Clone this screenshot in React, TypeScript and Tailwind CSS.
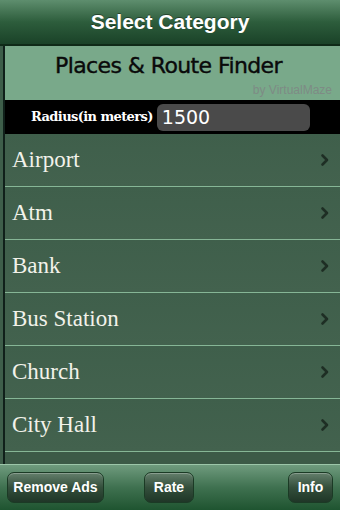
const categories = ['Airport', 'Atm', 'Bank', 'Bus Station', 'Church', 'City Hall'];

function Chevron() {
  return (
    <svg width="10" height="14" viewBox="0 0 10 14" className="shrink-0">
      <path d="M2.5 2.5 L7 7 L2.5 11.5" fill="none" stroke="#1e2e24" strokeWidth="2.6" strokeLinecap="round" strokeLinejoin="round" />
    </svg>
  );
}

function ToolButton({ label, className }: { label: string; className?: string }) {
  return (
    <button
      className={`h-[31px] rounded-[7px] border border-[#1b3a25] bg-gradient-to-b from-[#647f6c] via-[#344f3c] to-[#1f3627] text-[14px] font-bold text-white shadow-[inset_0_1px_0_rgba(255,255,255,0.25)] ${className ?? ''}`}
      style={{ fontFamily: '"Liberation Sans", Arial, sans-serif' }}
    >
      {label}
    </button>
  );
}

export default function App() {
  return (
    <div className="w-[340px] h-[510px] overflow-hidden flex flex-col bg-[#3a5a45]">
      <header
        className="h-[46px] shrink-0 flex items-center justify-center bg-gradient-to-b from-[#5e8e6e] via-[#2d5d3c] to-[#1a4228] border-b-2 border-[#0f2a18]"
        style={{ fontFamily: '"Liberation Sans", Arial, sans-serif' }}
      >
        <h1 className="text-[21px] font-bold text-white [text-shadow:0_-1px_0_rgba(0,0,0,0.4)]">Select Category</h1>
      </header>

      <div className="flex-1 flex min-h-0">
        <div className="w-[3px] shrink-0 bg-[#3e5e4a]" />
        <div className="w-[2px] shrink-0 bg-[#10201a]" />
        <div className="flex-1 flex flex-col min-w-0">
          <div className="h-[54px] shrink-0 bg-[#79a98a] flex flex-col items-center pt-[7px]">
            <div
              className="text-[22px] leading-[26px] text-[#0a0a0a] pr-[8px] [-webkit-text-stroke:0.4px_#0a0a0a]"
              style={{ fontFamily: '"DejaVu Sans", sans-serif', letterSpacing: '-0.6px' }}
            >
              Places &amp; Route Finder
            </div>
            <div
              className="self-end mt-[4px] pr-[8px] text-[12px] leading-[14px] text-[#7e8b85]"
              style={{ fontFamily: '"Liberation Sans", Arial, sans-serif' }}
            >
              by VirtualMaze
            </div>
          </div>

          <div className="h-[34px] shrink-0 bg-black flex items-center pl-[26px] pr-[30px] gap-[4px]">
            <span
              className="text-[13px] font-bold text-white whitespace-nowrap tracking-[-0.6px]"
              style={{ fontFamily: '"DejaVu Serif", Georgia, serif' }}
            >
              Radius(in meters)
            </span>
            <div
              className="flex-1 h-[27px] rounded-[6px] bg-[#4a4a4a] flex items-center pl-[5px] text-[19px] text-white"
              style={{ fontFamily: '"DejaVu Sans", sans-serif' }}
            >
              1500
            </div>
          </div>

          {categories.map((c) => (
            <div
              key={c}
              className="h-[53px] shrink-0 flex items-center justify-between pl-[7px] pr-[10px] bg-gradient-to-b from-[#3f5f4b] to-[#43624e] border-b-[1.5px] border-[#86b696]"
            >
              <span
                className="text-[23px] text-[#f2f2ea] pt-[1px]"
                style={{ fontFamily: '"Liberation Serif", "Times New Roman", serif' }}
              >
                {c}
              </span>
              <Chevron />
            </div>
          ))}
          <div className="flex-1 bg-[#3c5a47]" />
        </div>
      </div>

      <footer className="h-[46px] shrink-0 flex items-center px-[7px] bg-gradient-to-b from-[#6f9b7e] via-[#3f7150] to-[#1e5430] border-t border-[#9cc6a9]">
        <ToolButton label="Remove Ads" className="w-[97px]" />
        <ToolButton label="Rate" className="w-[50px] ml-[40px]" />
        <div className="flex-1" />
        <ToolButton label="Info" className="w-[45px]" />
      </footer>
    </div>
  );
}
